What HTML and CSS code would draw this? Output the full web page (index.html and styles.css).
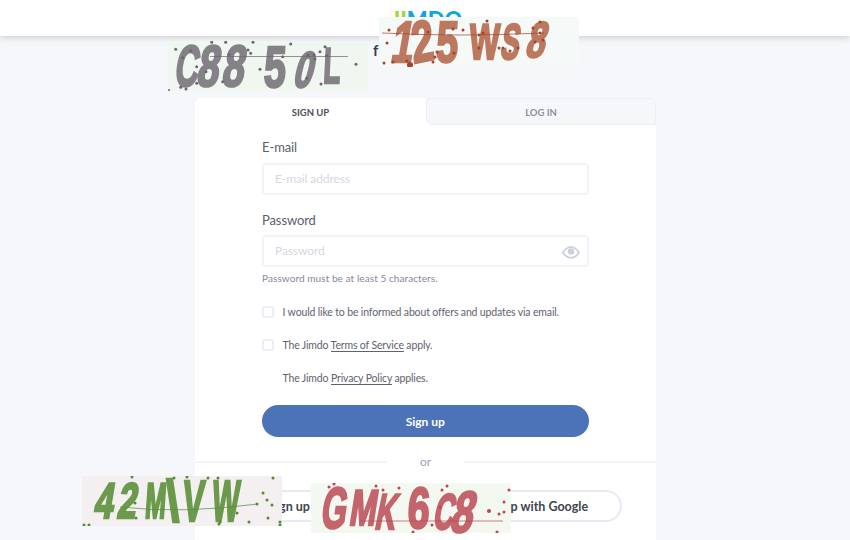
FILE: index.html
```html
<!DOCTYPE html>
<html lang="en">
<head>
<meta charset="utf-8">
<title>Jimdo sign up</title>
<link rel="stylesheet" href="styles.css">
</head>
<body>
<header class="topbar">
  <div class="logo"><span class="lg">JI</span><span class="lb">MDO</span></div>
</header>
<div class="social-f">f</div>
<main class="card">
  <nav class="tabs">
    <a class="tab tab-on">SIGN UP</a>
    <a class="tab tab-off">LOG IN</a>
  </nav>
  <form class="form">
    <label class="label">E-mail</label>
    <div class="input">E-mail address</div>
    <label class="label label-pw">Password</label>
    <div class="input input-pw">Password
      <svg class="eye" viewBox="0 0 20 14" width="18" height="13"><path d="M1 7C4 2.500 7 1 10 1s6 1.500 9 6c-3 4.500-6 6-9 6S4 11.500 1 7z" fill="none" stroke="#cdd1dd" stroke-width="2"/><circle cx="10" cy="6" r="3.600" fill="#cdd1dd"/></svg>
    </div>
    <p class="hint">Password must be at least 5 characters.</p>
    <div class="check check-1"><span class="box"></span><span>I would like to be informed about offers and updates via email.</span></div>
    <div class="check check-2"><span class="box"></span><span>The Jimdo <a class="link">Terms of Service</a> apply.</span></div>
    <div class="check check-3"><span>The Jimdo <a class="link">Privacy Policy</a> applies.</span></div>
    <button class="submit" type="button">Sign up</button>
  </form>
  <div class="or"><span>or</span></div>
  <div class="socials">
    <a class="soc">Sign up with Facebook</a>
    <a class="soc">Sign up with Google</a>
  </div>
</main>

<div class="cap cap1">
  <div class="word">
    <span class="ch w24 wide sk1">C</span><span class="ch w25 dig sk1">8</span><span class="ch w26 dig sk1">8</span><span class="ch w26 gap14 dig sk3 low">5</span><span class="ch w25 gap7 dig sk2 small">0</span><span class="ch w25 wide sk3 small">L</span>
  </div>
  <svg class="noise" viewBox="0 0 200 50" width="200" height="50">
    <path d="M42 15.500H180" class="ln"/>
    <g class="dots"><circle cx="7.700" cy="8.300" r="1.500"/><circle cx="22.700" cy="9.700" r="1.500"/><circle cx="14.700" cy="16.700" r="1.500"/><circle cx="28.700" cy="25.700" r="1.500"/><circle cx="38" cy="30.700" r="1.500"/><circle cx="43.700" cy="1.300" r="1.500"/><circle cx="57.700" cy="1.300" r="1.500"/><circle cx="85" cy="1.300" r="1.500"/><circle cx="122.700" cy="3" r="1.500"/><circle cx="80" cy="9" r="1.500"/><circle cx="82.700" cy="12.300" r="1.500"/><circle cx="61" cy="13.300" r="1.500"/><circle cx="114.700" cy="15.700" r="1.500"/><circle cx="92" cy="28.300" r="1.500"/><circle cx="188" cy="23.300" r="1.500"/><circle cx="138.700" cy="37.300" r="1.500"/><circle cx="153" cy="43" r="1.500"/><circle cx="158.700" cy="14.700" r="1.500"/><circle cx="140" cy="14" r="1.500"/><circle cx="146" cy="14" r="1.500"/><circle cx="152" cy="10.700" r="1.500"/><circle cx="157" cy="5.700" r="1.500"/><circle cx="28.700" cy="42.300" r="1.500"/><circle cx="12.700" cy="46.300" r="1.500"/><circle cx="18" cy="48" r="1.500"/><circle cx="54.700" cy="40.700" r="1.500"/><circle cx="147" cy="18" r="1.500"/><circle cx="1" cy="49" r="1"/></g>
  </svg>
</div>

<div class="cap cap2">
  <div class="word">
    <span class="ch w18 gap8 dig sk1">1</span><span class="ch w22 dig sk4">2</span><span class="ch w22 gap3 dig sk3">5</span><span class="ch w30 gap9 wv sk3 small">W</span><span class="ch w22 gap3 wide sk1 small">S</span><span class="ch w22 gap7 dig sk2 small up">8</span>
  </div>
  <svg class="noise" viewBox="0 0 200 50" width="200" height="50">
    <path d="M3 16Q80 20 165 16" class="ln"/>
    <g class="dots"><circle cx="10" cy="13" r="1.500"/><circle cx="8" cy="26" r="1.500"/><circle cx="5" cy="46" r="1.500"/><circle cx="14" cy="45" r="1.500"/><circle cx="28" cy="44" r="1.500"/><circle cx="49" cy="15" r="1.500"/><circle cx="31" cy="48" r="3"/><circle cx="54" cy="45" r="1.500"/><circle cx="56" cy="40" r="1.500"/><circle cx="74" cy="12" r="1.500"/><circle cx="84" cy="13" r="1.500"/><circle cx="75" cy="36" r="1.500"/><circle cx="58" cy="35" r="1.500"/><circle cx="108" cy="4" r="1.500"/><circle cx="104" cy="16" r="1.500"/><circle cx="100" cy="18" r="1.500"/><circle cx="100" cy="31" r="1.500"/><circle cx="120" cy="31" r="1.500"/><circle cx="124" cy="31" r="1.500"/><circle cx="131" cy="34" r="1.500"/><circle cx="139" cy="31" r="1.500"/><circle cx="154" cy="11" r="1.500"/><circle cx="161" cy="5" r="1.500"/><circle cx="164" cy="23" r="1.500"/><circle cx="156" cy="25" r="1.500"/><circle cx="161" cy="16" r="1.500"/></g>
  </svg>
</div>

<div class="cap cap3">
  <div class="word">
    <span class="ch w24 gap7 dig sk1 small">4</span><span class="ch w20 dig sk1 small">2</span><span class="ch w26 gap3 thin sk5 small">M</span><span class="ch w12 dig sk6">\</span><span class="ch w26 wide sk5">V</span><span class="ch w38 thin sk5">W</span>
  </div>
  <svg class="noise" viewBox="0 0 200 50" width="200" height="50">
    <path d="M38 31Q100 38 176 28" class="ln"/>
    <g class="dots"><circle cx="50" cy="1" r="1.500"/><circle cx="92" cy="2" r="1.500"/><circle cx="105" cy="1" r="1.500"/><circle cx="126" cy="2" r="1.500"/><circle cx="136" cy="2" r="1.500"/><circle cx="191" cy="2" r="1.500"/><circle cx="181" cy="17" r="1.500"/><circle cx="185" cy="24" r="1.500"/><circle cx="190" cy="29" r="1.500"/><circle cx="175" cy="28" r="1.500"/><circle cx="53" cy="27" r="1.500"/><circle cx="54" cy="42" r="1.500"/><circle cx="155" cy="37" r="1.500"/><circle cx="138" cy="46" r="1.500"/><circle cx="137" cy="48" r="1.500"/><circle cx="167" cy="46" r="1.500"/><circle cx="186" cy="42" r="1.500"/><circle cx="198" cy="46" r="1.500"/><circle cx="198" cy="49" r="1.500"/><circle cx="2" cy="49" r="1.500"/><circle cx="7" cy="49" r="1.500"/></g>
  </svg>
</div>

<div class="cap cap4">
  <div class="word">
    <span class="ch w30 gap2 wide sk1">G</span><span class="ch w28 wv sk1 small">M</span><span class="ch w18 wide sk2 small">K</span><span class="ch w24 gap12 dig sk3">6</span><span class="ch w18 gap4 wide sk2 small">C</span><span class="ch w28 dig sk2">8</span>
  </div>
  <svg class="noise" viewBox="0 0 200 50" width="200" height="50">
    <path d="M49 38H192" class="ln"/>
    <g class="dots"><circle cx="23" cy="1" r="1.500"/><circle cx="18" cy="4" r="1.500"/><circle cx="65" cy="3" r="1.500"/><circle cx="72" cy="7" r="1.500"/><circle cx="88" cy="5" r="1.500"/><circle cx="136" cy="3" r="1.500"/><circle cx="131" cy="7" r="1.500"/><circle cx="198" cy="7" r="1.500"/><circle cx="193" cy="19" r="1.500"/><circle cx="178" cy="28" r="2"/><circle cx="193" cy="29" r="1.500"/><circle cx="188" cy="31" r="1.500"/><circle cx="121" cy="42" r="1.500"/><circle cx="102" cy="49" r="1.500"/><circle cx="186" cy="49" r="1.500"/><circle cx="129" cy="24" r="1.500"/></g>
  </svg>
</div>
</body>
</html>
```
FILE: styles.css
```css
* { box-sizing: border-box; }
html, body { margin: 0; height: 540px; overflow: hidden; }
body {
  position: relative;
  background: #f6f7fa;
  font-family: Lato, "Liberation Sans", sans-serif;
  color: #5b5e6b;
}
.topbar {
  height: 36px;
  background: #fff;
  box-shadow: 0 1px 7px rgba(70, 75, 95, .28);
  display: flex;
  justify-content: center;
  padding-top: 6px;
}
.logo { font-size: 22px; font-weight: 900; line-height: 28px; margin-left: 3px; }
.lg { color: #a8d03f; }
.lb { color: #0fa8dc; }
.social-f {
  position: absolute;
  left: 373px;
  top: 41px;
  font-size: 15px;
  font-weight: 700;
  color: #3a3f4c;
}
.card {
  width: 461px;
  height: 460px;
  margin: 62px 0 0 195px;
  background: #fff;
  border-radius: 6px 6px 0 0;
}
.tabs { display: flex; height: 27px; }
.tab {
  flex: none;
  font-size: 9.500px;
  font-weight: 700;
  display: flex;
  align-items: center;
  justify-content: center;
  padding-top: 1px;
}
.tab-on { width: 231px; color: #4c4f5c; }
.tab-off {
  width: 230px;
  color: #8d90a2;
  background: #f6f7fa;
  border: 1px solid #eeeff5;
  border-radius: 0 6px 0 6px;
}
.form { padding: 13px 67.500px 0 67px; display: flex; flex-direction: column; }
.label { font-size: 13px; line-height: 16px; height: 16px; color: #5b5e68; margin-top: 1px; letter-spacing: -.1px; }
.label-pw { margin-top: 17px; }
.input {
  height: 32px;
  margin-top: 8px;
  border: 2px solid #f3f3f9;
  border-radius: 4px;
  font-size: 12px;
  line-height: 28px;
  padding-left: 11px;
  color: #d6d8e2;
  letter-spacing: -.1px;
  display: flex;
  align-items: center;
  justify-content: space-between;
}
.input-pw { margin-top: 7px; }
.eye { margin-right: 7px; margin-top: 2px; }
.hint { margin: 5px 0 0; font-size: 10px; line-height: 12px; color: #85889a; letter-spacing: .08px; }
.check { display: flex; align-items: center; font-size: 10.500px; line-height: 14px; color: #5f6270; letter-spacing: -.15px; }
.check-1 { margin-top: 21px; }
.check-2 { margin-top: 19px; }
.check-3 { margin-top: 19px; padding-left: 20.500px; }
.box {
  width: 12px;
  height: 12px;
  border: 2px solid #eeeef7;
  border-radius: 2px;
  margin-right: 8.500px;
  flex: none;
}
.link { border-bottom: 1px solid #5f6270; color: #5f6270; }
.submit {
  margin-top: 20px;
  height: 32px;
  border: 0;
  border-radius: 16px;
  background: #4c72b8;
  color: #fff;
  font: 700 12px Lato, "Liberation Sans", sans-serif;
}
.or {
  margin-top: 24px;
  height: 2px;
  background: #f3f3f9;
  display: flex;
  justify-content: center;
  align-items: center;
}
.or span {
  background: #fff;
  padding: 0 33px;
  font-size: 12px;
  line-height: 14px;
  color: #9da4bb;
}
.socials { display: flex; gap: 10px; padding: 27px 34px 0 35px; }
.soc {
  flex: 1;
  height: 32px;
  border: 2px solid #e9e9f3;
  border-radius: 16px;
  padding-left: 12px;
  font-size: 12.500px;
  font-weight: 700;
  color: #41444f;
  white-space: nowrap;
  display: flex;
  align-items: center;
  justify-content: center;
}

/* distorted verification images lying over the page */
.cap {
  position: absolute;
  width: 200px;
  height: 50px;
}
.cap1 { left: 168px; top: 41px; background: #f0f7f0; color: #858287; --dot: #6d6570; }
.cap2 { left: 379px; top: 17px; background: #f5f9f8; color: #bd7860; --dot: #a3452a; }
.cap3 { left: 82px; top: 476px; background: #f4eff1; color: #6b9a4c; --dot: #578a38; }
.cap4 { left: 311px; top: 483px; background: #f3f8f1; color: #c4646c; --dot: #c3424f; }
.word {
  display: flex;
  align-items: center;
  height: 50px;
  padding-left: 3px;
  font-family: "Liberation Sans", sans-serif;
  font-weight: 700;
  font-size: 58px;
  line-height: 50px;
  filter: blur(.6px);
}
.ch { display: block; flex: none; text-align: center; -webkit-text-stroke: 2.500px currentColor; }
.w12 { width: 12px; } .w18 { width: 18px; } .w20 { width: 20px; } .w22 { width: 22px; } .w24 { width: 24px; } .w25 { width: 25px; }
.w26 { width: 26px; } .w28 { width: 28px; } .w30 { width: 30px; } .w38 { width: 38px; }
.gap2 { margin-left: 2px; } .gap3 { margin-left: 3px; } .gap4 { margin-left: 4px; } .gap7 { margin-left: 7px; } .gap8 { margin-left: 8px; } .gap9 { margin-left: 9px; }
.gap12 { margin-left: 12px; } .gap14 { margin-left: 14px; }
.dig { --sx: .68; }
.wide { --sx: .56; }
.thin { --sx: .5; }
.wv { --sx: .64; }
.sk1 { transform: scaleX(var(--sx)) skewX(-14deg); }
.sk2 { transform: scaleX(var(--sx)) skewX(-20deg) translateY(4px); }
.sk3 { transform: scaleX(var(--sx)) skewX(-5deg); }
.sk4 { transform: scaleX(var(--sx)) rotate(-8deg); }
.sk5 { transform: scaleX(var(--sx)) skewX(-8deg); }
.sk6 { transform: scaleX(.8); }
.small { font-size: 50px; }
.low { margin-top: 2px; }
.up { margin-top: -12px; }
.noise { position: absolute; left: 0; top: 0; }
.ln { fill: none; stroke: var(--dot); stroke-width: 1; opacity: .7; }
.dots { fill: var(--dot); }
```
